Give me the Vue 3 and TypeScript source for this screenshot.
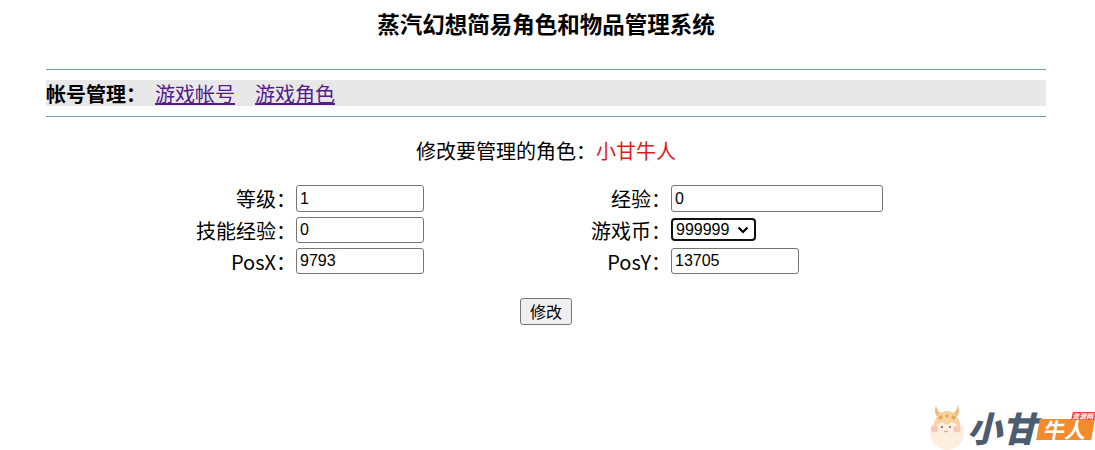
<script setup lang="ts">
interface Field {
  label: string;
  value: string;
  wide?: boolean;
  options?: string[];
}

const rows: Field[][] = [
  [
    { label: '等级：', value: '1' },
    { label: '经验：', value: '0', wide: true }
  ],
  [
    { label: '技能经验：', value: '0' },
    { label: '游戏币：', value: '999999', options: ['999999'] }
  ],
  [
    { label: 'PosX：', value: '9793' },
    { label: 'PosY：', value: '13705' }
  ]
];
</script>

<template>
  <div class="page">
    <h1 class="title">蒸汽幻想简易角色和物品管理系统</h1>
    <hr class="rule rule-top" />
    <nav class="menu">
      <b>帐号管理：</b>
      <a href="#accounts">游戏帐号</a>
      <a href="#roles">游戏角色</a>
    </nav>
    <hr class="rule" />
    <p class="subject">修改要管理的角色：<span class="name">小甘牛人</span></p>
    <form class="form" @submit.prevent>
      <template v-for="(row, i) in rows" :key="i">
        <template v-for="field in row" :key="field.label">
          <label class="label">{{ field.label }}</label>
          <div class="cell">
            <div v-if="field.options" class="select-wrap">
              <select class="select">
                <option v-for="o in field.options" :key="o">{{ o }}</option>
              </select>
              <svg class="chevron" width="12" height="8" viewBox="0 0 12 8">
                <path d="M1.5 1.5 L6 6 L10.5 1.5" fill="none" stroke="#000" stroke-width="2.2" />
              </svg>
            </div>
            <input
              v-else
              class="input"
              :class="{ wide: field.wide, tall: i === 0 }"
              type="text"
              :value="field.value"
            />
          </div>
        </template>
      </template>
    </form>
    <div class="actions">
      <button class="submit" type="submit">修改</button>
    </div>

    <div class="logo">
      <svg class="cow" width="42" height="46" viewBox="0 0 42 46">
        <path d="M10 1 C8 7 9 12 13 14 L17 10 C13 9 11 6 10 1Z" fill="#ecc07a" />
        <path d="M32 1 C34 7 33 12 29 14 L25 10 C29 9 31 6 32 1Z" fill="#ecc07a" />
        <ellipse cx="21" cy="29" rx="17" ry="17" fill="#fdeedd" />
        <path d="M8 24 C7 14 14 7 21 7 C28 7 35 14 34 24 C31 20 28 19 26 18 L21 21 L16 18 C14 19 11 20 8 24Z" fill="#f6d49c" />
        <path d="M12 13 L15 11 L17 14 L14 16Z" fill="#e5a45c" />
        <path d="M30 13 L27 11 L25 14 L28 16Z" fill="#e5a45c" />
        <path d="M19 12 L21 10 L23 12 L21 14Z" fill="#e5a45c" />
        <circle cx="8.5" cy="25" r="3.6" fill="#f9c6ba" />
        <circle cx="31" cy="25" r="3.6" fill="#f9c6ba" />
        <circle cx="16" cy="23" r="0.9" fill="#5b4a3c" />
        <circle cx="24" cy="23" r="0.9" fill="#5b4a3c" />
        <path d="M18 27 Q20 29 22 27" fill="none" stroke="#d09a78" stroke-width="1" />
      </svg>
      <span class="logo-text">小甘</span>
      <span class="logo-badge">牛人</span>
      <span class="logo-tag">资源网</span>
    </div>
  </div>
</template>

<style scoped>
.page {
  position: relative;
  box-sizing: border-box;
  width: 1095px;
  height: 450px;
  padding: 0 49px 0 46px;
  background: #fff;
  color: #000;
  font-family: "Noto Sans CJK SC", "Noto Sans", sans-serif;
  font-size: 20px;
}

.title {
  margin: 0;
  padding-top: 8px;
  height: 59px;
  box-sizing: border-box;
  font-size: 22.5px;
  line-height: 30px;
  font-weight: 700;
  text-align: center;
}

.rule {
  height: 1px;
  margin: 0;
  border: 0;
  background: #6f9bb5;
}

.rule-top {
  margin-top: 10px;
}

.menu {
  display: flex;
  align-items: flex-start;
  gap: 20px;
  height: 26px;
  margin: 10px 0 10px;
  background: #e8e8e8;
  line-height: 28px;
}

.menu b {
  width: 89px;
  white-space: nowrap;
}

.menu a {
  color: #551a8b;
  text-decoration: underline;
}

.subject {
  margin: 19px 0 0;
  height: 30px;
  line-height: 30px;
  text-align: center;
}

.name {
  color: #d81e1e;
}

.form {
  display: grid;
  grid-template-columns: 250px 250px 125px 375px;
  grid-template-rows: 32px 31px 31px;
  margin-top: 19px;
  align-items: start;
}

.label {
  line-height: 27px;
  text-align: right;
}

.cell {
  display: flex;
}

.input {
  box-sizing: border-box;
  width: 128px;
  height: 26px;
  padding: 1px 3px;
  border: 1px solid #767676;
  border-radius: 3px;
  background: #fff;
  color: #000;
  font-family: "Liberation Sans", Arial, sans-serif;
  font-size: 16px;
}

.input.tall {
  height: 27px;
}

.input.wide {
  width: 212px;
}

.select-wrap {
  position: relative;
  display: flex;
}

.select {
  box-sizing: border-box;
  width: 85px;
  height: 23px;
  margin-top: 1px;
  padding: 0 0 0 3px;
  appearance: none;
  border: 2px solid #101010;
  border-radius: 4px;
  background: #fff;
  color: #000;
  font-family: "Liberation Sans", Arial, sans-serif;
  font-size: 16px;
}

.chevron {
  position: absolute;
  left: 66px;
  top: 9px;
  pointer-events: none;
}

.actions {
  display: flex;
  justify-content: center;
  margin-top: 19px;
}

.submit {
  box-sizing: border-box;
  width: 52px;
  height: 27px;
  padding: 0;
  border: 1px solid #767676;
  border-radius: 3px;
  background: #efefef;
  color: #000;
  font-family: "Noto Sans CJK SC", sans-serif;
  font-size: 16px;
  line-height: 23px;
}

.logo {
  position: absolute;
  left: 926px;
  top: 404px;
  width: 169px;
  height: 46px;
}

.cow {
  position: absolute;
  left: 0;
  top: 0;
}

.logo-text {
  position: absolute;
  left: 41px;
  top: 0;
  color: #4d5d70;
  font-size: 35px;
  line-height: 46px;
  font-weight: 900;
  font-style: italic;
  white-space: nowrap;
}

.logo-badge {
  position: absolute;
  left: 112px;
  top: 15px;
  width: 55px;
  height: 21px;
  background: #f38a2c;
  color: #fff;
  font-size: 21px;
  line-height: 21px;
  font-weight: 700;
  text-align: center;
  transform: skewX(-10deg);
}

.logo-tag {
  position: absolute;
  left: 146px;
  top: 8px;
  width: 23px;
  height: 8px;
  background: #e8403a;
  color: #fff;
  font-size: 7px;
  line-height: 8px;
  font-weight: 700;
  text-align: center;
  white-space: nowrap;
  transform: skewX(-12deg);
}
</style>

<style>
html,
body {
  margin: 0;
  padding: 0;
  background: #fff;
}
</style>
